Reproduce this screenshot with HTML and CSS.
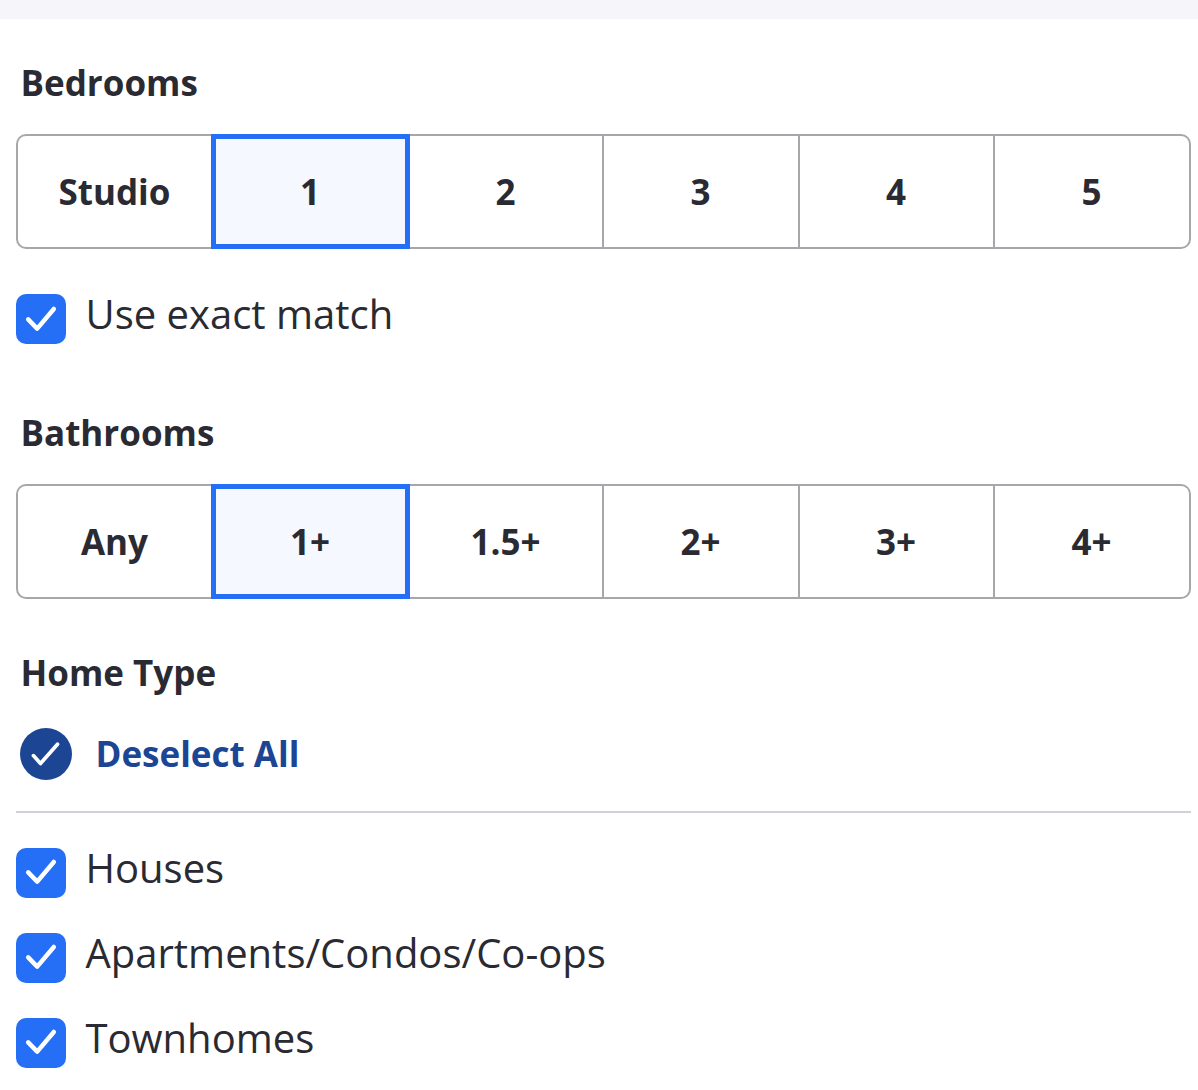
FILE: index.html
```html
<!DOCTYPE html>
<html lang="en">
<head>
<meta charset="utf-8">
<title>Home filters</title>
<link rel="stylesheet" href="styles.css">
</head>
<body>
<svg class="defs" width="0" height="0" aria-hidden="true">
  <symbol id="check" viewBox="0 0 50 50"><path d="M12.2 25.4 21.2 34.6 37.8 15" fill="none" stroke="#fff" stroke-width="4.5" stroke-linecap="round" stroke-linejoin="round"/></symbol>
</svg>
<div class="topbar"></div>
<main class="filters">
  <section class="bedrooms">
    <h2 class="heading">Bedrooms</h2>
    <div class="segments">
      <button class="segment">Studio</button><button class="segment selected">1</button><button class="segment">2</button><button class="segment">3</button><button class="segment">4</button><button class="segment">5</button>
    </div>
    <div class="option exact"><span class="box"><svg><use href="#check"/></svg></span><span class="label">Use exact match</span></div>
  </section>
  <section class="bathrooms">
    <h2 class="heading">Bathrooms</h2>
    <div class="segments">
      <button class="segment">Any</button><button class="segment selected">1+</button><button class="segment">1.5+</button><button class="segment">2+</button><button class="segment">3+</button><button class="segment">4+</button>
    </div>
  </section>
  <section class="types">
    <h2 class="heading">Home Type</h2>
    <div class="deselect">
      <svg class="round" viewBox="0 0 52 52"><circle cx="26" cy="26" r="26" fill="#1c4594"/><path d="M13.4 27.6 20.5 35.5 37.5 16.2" fill="none" stroke="#fff" stroke-width="3.7" stroke-linecap="round" stroke-linejoin="round"/></svg>
      <span>Deselect All</span>
    </div>
    <div class="list">
      <div class="option"><span class="box"><svg><use href="#check"/></svg></span><span class="label">Houses</span></div>
      <div class="option"><span class="box"><svg><use href="#check"/></svg></span><span class="label">Apartments/Condos/Co-ops</span></div>
      <div class="option"><span class="box"><svg><use href="#check"/></svg></span><span class="label">Townhomes</span></div>
    </div>
  </section>
</main>
</body>
</html>
```
FILE: styles.css
```css
* { box-sizing: border-box; }
body { margin: 0; height: 1090px; overflow: hidden; background: #fff; color: #2a2a33; font-family: "Open Sans", sans-serif; }
.defs { display: none; }
.topbar { height: 19px; background: #f5f5fa; }
.filters { padding: 40px 7px 0 16px; }
.heading { margin: 0 0 27px 4.5px; font-size: 35px; line-height: 48px; font-weight: 700; }
.segments { display: grid; grid-template-columns: 195px 199px 194px 196px 195px 196px; height: 115px; border-radius: 10px; }
.segment { margin: 0; padding: 0 1px 0 0; border: 2px solid #a7a6ab; border-left-width: 0; background: #fff; color: inherit; font: 700 35px/47px "Open Sans", sans-serif; }
.segment:first-child { padding: 0; border-left-width: 2px; border-right-width: 0; border-radius: 10px 0 0 10px; }
.segment:last-child { border-radius: 0 10px 10px 0; }
.segment.selected { border: 5px solid #256ef6; background: #f5f9ff; }
.option { display: flex; height: 50px; gap: 19.5px; }
.exact { margin-top: 45px; }
.box { width: 50px; height: 50px; border-radius: 10px; background: #256ef6; }
.box svg { display: block; width: 50px; height: 50px; }
.label { font-size: 40px; line-height: 55px; margin-top: -8px; }
.bathrooms { margin-top: 65px; }
.types { margin-top: 50px; }
.types .heading { margin-bottom: 31px; }
.deselect { display: flex; align-items: center; gap: 23.5px; height: 52px; padding-left: 4px; color: #1c4594; font-size: 35px; line-height: 48px; font-weight: 700; }
.round { width: 52px; height: 52px; }
.list { display: grid; gap: 35px; margin-top: 31px; padding-top: 35px; border-top: 2px solid #d0d0d6; }
.list .box svg { margin-top: -1px; }
```
